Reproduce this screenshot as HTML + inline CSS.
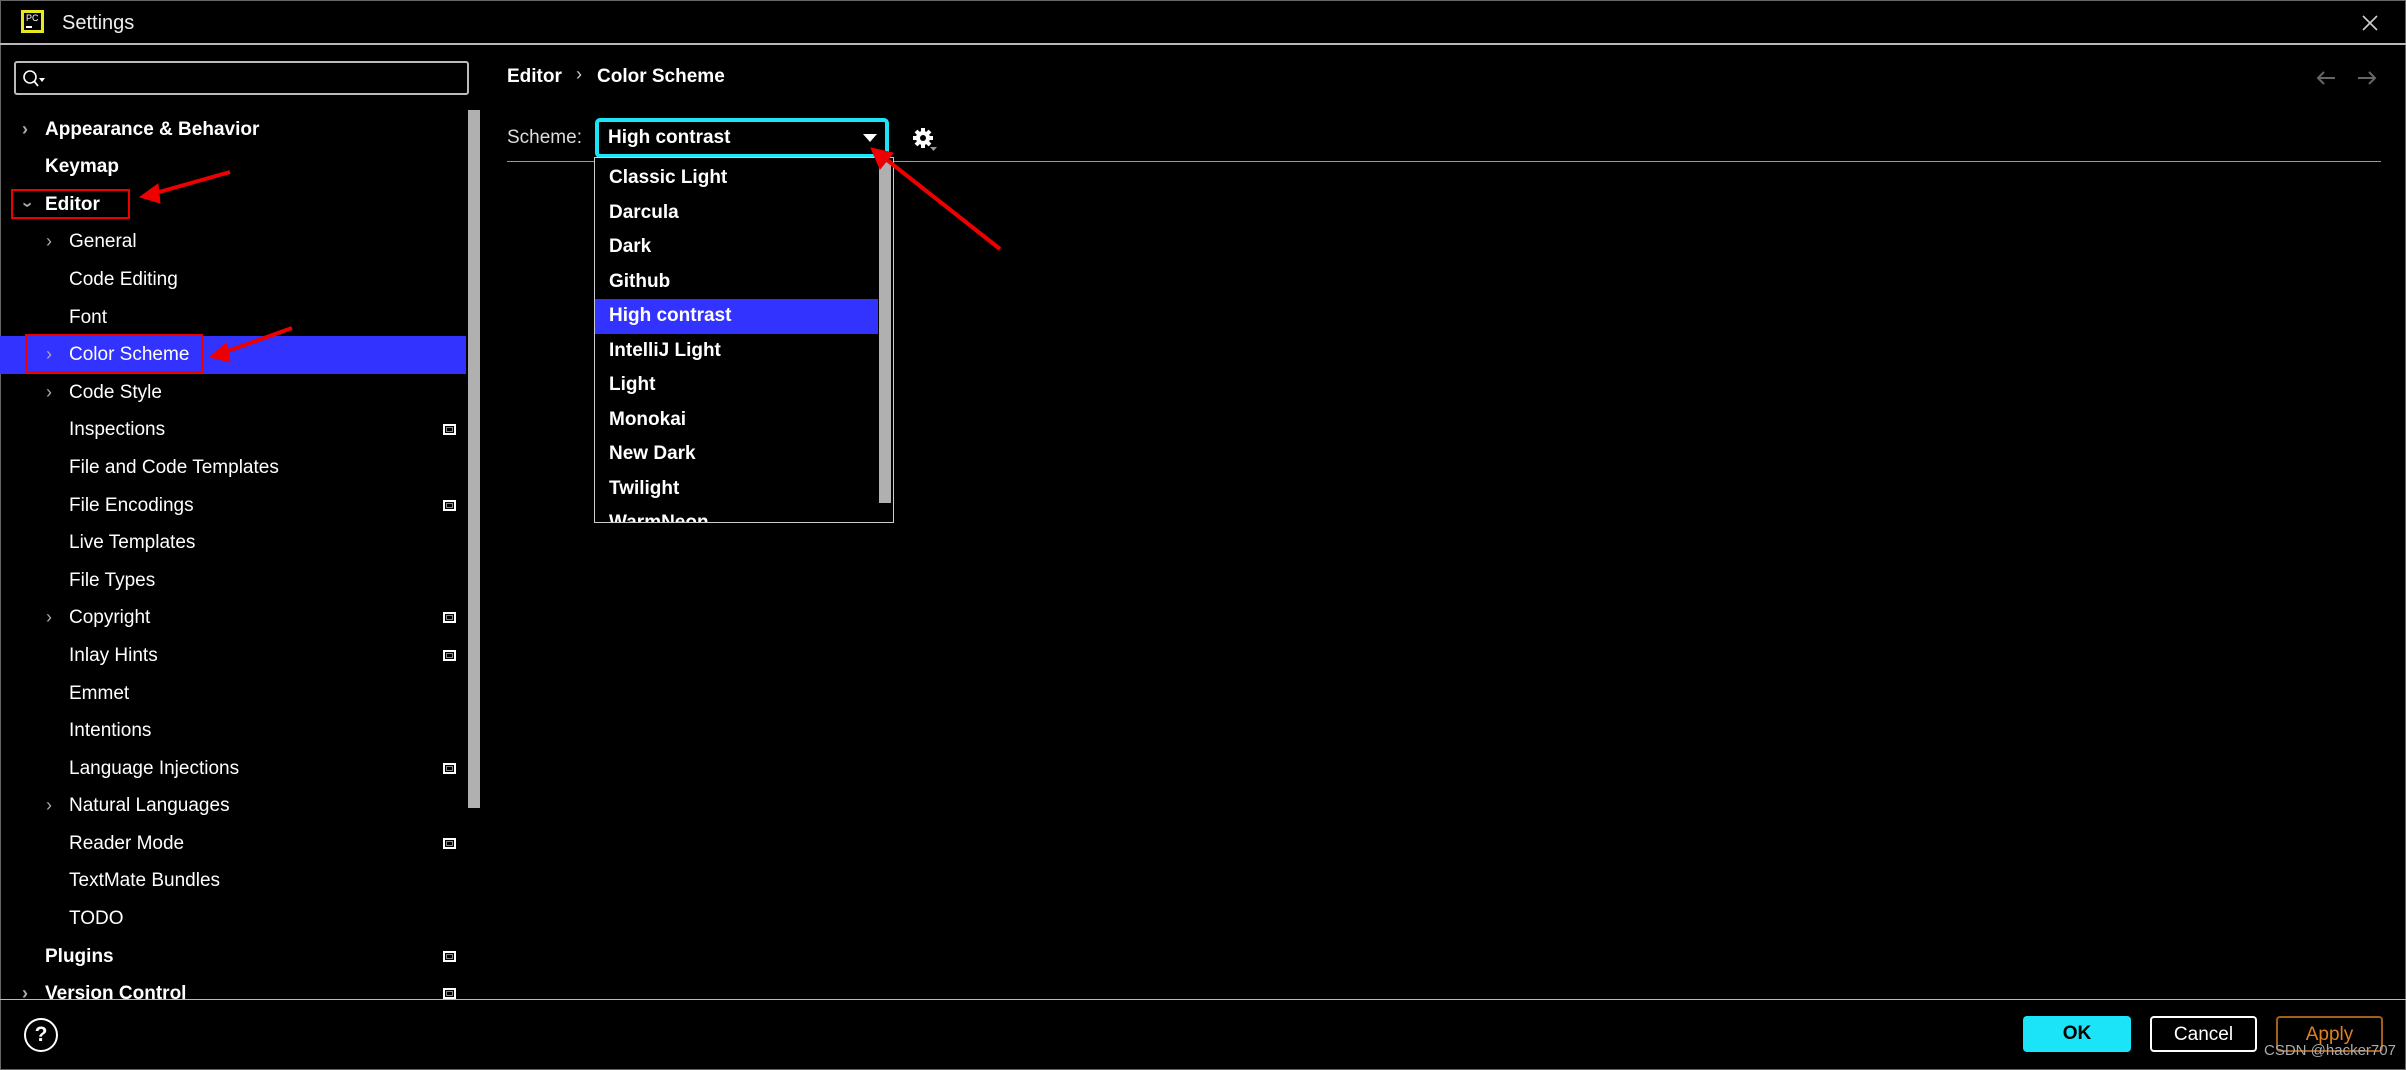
<!DOCTYPE html>
<html><head><meta charset="utf-8"><style>
*{margin:0;padding:0;box-sizing:border-box}
body{width:2406px;height:1070px;background:#000;overflow:hidden;position:relative;font-family:"Liberation Sans",sans-serif;color:#fff}
.abs{position:absolute}
.tree{position:absolute;left:0;top:110.6px;width:466px;height:888px;overflow:hidden}
.row{height:37.6px;line-height:37.6px;font-size:19px;position:relative;white-space:nowrap}
.row.b{font-weight:bold}
.row .t{position:absolute}
.l0 .t{left:45px}.l1 .t{left:69px}
.chev{position:absolute;top:0;font-size:18px;color:#aaa}
.l0 .chev{left:22px}.l1 .chev{left:46px}
.sel{background:#3333ff}
.ic{position:absolute;left:443px;top:13px;width:13px;height:11px;border:2px solid #fff;background:#000}
.ic:after{content:"";position:absolute;left:1px;top:1px;right:1px;bottom:1px;border:1px solid #888}
.item{height:34.5px;line-height:34.5px;font-size:19px;font-weight:bold;padding-left:14px;white-space:nowrap}
.btn{position:absolute;top:1016px;height:36px;border-radius:4px;font-size:19px;text-align:center;line-height:34px}
</style></head><body>
<div class="abs" style="left:0;top:0;width:2406px;height:1070px;border:1px solid #666"></div>
<div class="abs" style="left:21px;top:10px;width:23px;height:23px;background:#e8e820;"></div>
<div class="abs" style="left:24px;top:13px;width:17px;height:17px;background:#000;color:#fff;font-size:9px;line-height:10px;padding-left:2px">PC<div style="width:6px;height:2px;background:#fff;margin-top:3px"></div></div>
<div class="abs" style="left:62px;top:12px;font-size:20px;color:#eee">Settings</div>
<svg class="abs" style="left:2360px;top:13px" width="20" height="20"><path d="M3 3L17 17M17 3L3 17" stroke="#ccc" stroke-width="1.6"/></svg>
<div class="abs" style="left:0;top:43px;width:2406px;height:2px;background:#b8b8b8"></div>
<div class="abs" style="left:14px;top:61px;width:455px;height:34px;border:2px solid #bbb;border-radius:3px"></div>
<svg class="abs" style="left:22px;top:68px" width="28" height="22"><circle cx="8" cy="9" r="6" fill="none" stroke="#fff" stroke-width="1.6"/><path d="M12 13L16 18" stroke="#fff" stroke-width="1.8"/><path d="M17 10L23 10L20 14Z" fill="#fff"/></svg>
<div class="tree">
<div class="row b l0"><span class="chev">›</span><span class="t">Appearance &amp; Behavior</span></div>
<div class="row b l0"><span class="t">Keymap</span></div>
<div class="row b l0"><span class="chev" style="transform:rotate(90deg);left:24px">›</span><span class="t">Editor</span></div>
<div class="row l1"><span class="chev">›</span><span class="t">General</span></div>
<div class="row l1"><span class="t">Code Editing</span></div>
<div class="row l1"><span class="t">Font</span></div>
<div class="row l1 sel"><span class="chev">›</span><span class="t">Color Scheme</span></div>
<div class="row l1"><span class="chev">›</span><span class="t">Code Style</span></div>
<div class="row l1"><span class="t">Inspections</span><i class="ic"></i></div>
<div class="row l1"><span class="t">File and Code Templates</span></div>
<div class="row l1"><span class="t">File Encodings</span><i class="ic"></i></div>
<div class="row l1"><span class="t">Live Templates</span></div>
<div class="row l1"><span class="t">File Types</span></div>
<div class="row l1"><span class="chev">›</span><span class="t">Copyright</span><i class="ic"></i></div>
<div class="row l1"><span class="t">Inlay Hints</span><i class="ic"></i></div>
<div class="row l1"><span class="t">Emmet</span></div>
<div class="row l1"><span class="t">Intentions</span></div>
<div class="row l1"><span class="t">Language Injections</span><i class="ic"></i></div>
<div class="row l1"><span class="chev">›</span><span class="t">Natural Languages</span></div>
<div class="row l1"><span class="t">Reader Mode</span><i class="ic"></i></div>
<div class="row l1"><span class="t">TextMate Bundles</span></div>
<div class="row l1"><span class="t">TODO</span></div>
<div class="row b l0"><span class="t">Plugins</span><i class="ic"></i></div>
<div class="row b l0"><span class="chev">›</span><span class="t">Version Control</span><i class="ic"></i></div>
</div>
<div class="abs" style="left:468px;top:110px;width:12px;height:698px;background:#b0b0b0"></div>
<div class="abs" style="left:507px;top:66px;font-size:19px;font-weight:bold">Editor</div>
<div class="abs" style="left:576px;top:64px;font-size:18px;color:#ccc">›</div>
<div class="abs" style="left:597px;top:66px;font-size:19px;font-weight:bold">Color Scheme</div>
<svg class="abs" style="left:2315px;top:68px" width="64" height="20"><path d="M20 10H3M9 4L3 10L9 16" stroke="#666" stroke-width="2" fill="none"/><path d="M43 10H60M54 4L60 10L54 16" stroke="#666" stroke-width="2" fill="none"/></svg>
<div class="abs" style="left:507px;top:127px;font-size:19px;color:#ddd">Scheme:</div>
<div class="abs" style="left:507px;top:161px;width:1874px;height:1px;background:#999"></div>
<div class="abs" style="left:595px;top:118px;width:294px;height:40px;border:4px solid #1ce4f8;border-radius:5px;background:#000"></div>
<div class="abs" style="left:608px;top:127px;font-size:19px;font-weight:bold">High contrast</div>
<svg class="abs" style="left:862px;top:133px" width="16" height="10"><path d="M1 1H15L8 9Z" fill="#fff"/></svg>
<svg class="abs" style="left:912px;top:127px" width="26" height="26"><g transform="translate(11,11)" fill="#fff"><circle r="7"/><g stroke="#fff" stroke-width="4"><path d="M0 -10V10M-10 0H10M-7 -7L7 7M7 -7L-7 7"/></g><circle r="3" fill="#000"/></g><path d="M18 20H25L21.5 24Z" fill="#999"/></svg>
<div class="abs" style="left:594px;top:157px;width:300px;height:366px;border:1px solid #ccc;background:#000;overflow:hidden;padding-top:3px">
<div class="item">Classic Light</div>
<div class="item">Darcula</div>
<div class="item">Dark</div>
<div class="item">Github</div>
<div class="item" style="background:#3333ff;width:283px">High contrast</div>
<div class="item">IntelliJ Light</div>
<div class="item">Light</div>
<div class="item">Monokai</div>
<div class="item">New Dark</div>
<div class="item">Twilight</div>
<div class="item">WarmNeon</div>
<div class="abs" style="left:284px;top:3px;width:12px;height:342px;background:#b0b0b0"></div>
</div>
<div class="abs" style="left:0;top:999px;width:2406px;height:1px;background:#bbb"></div>
<div class="abs" style="left:24px;top:1018px;width:34px;height:34px;border:2px solid #fff;border-radius:50%;text-align:center;line-height:30px;font-size:21px;font-weight:bold">?</div>
<div class="btn" style="left:2023px;width:108px;background:#1ce4f8;color:#000;font-weight:bold;line-height:36px">OK</div>
<div class="btn" style="left:2150px;width:107px;border:2px solid #fff;color:#fff">Cancel</div>
<div class="btn" style="left:2276px;width:107px;border:2px solid #a0601a;color:#e08020">Apply</div>
<div class="abs" style="left:2264px;top:1042px;font-size:15px;color:#aaa">CSDN @hacker707</div>
<div class="abs" style="left:11px;top:189px;width:119px;height:30px;border:2px solid #e00"></div>
<div class="abs" style="left:25px;top:334px;width:178px;height:39px;border:2px solid #e00"></div>
<svg class="abs" style="left:0;top:0" width="1100" height="400">
<g stroke="#e00" stroke-width="4" fill="#e00">
<path d="M230 172L152 194"/><path d="M140 197L158 184L160 203Z" stroke-width="1"/>
<path d="M292 328L222 353"/><path d="M210 357L226 343L230 362Z" stroke-width="1"/>
<path d="M1000 249L882 156"/><path d="M871 148L893 153L880 169Z" stroke-width="1"/>
</g></svg>
</body></html>
